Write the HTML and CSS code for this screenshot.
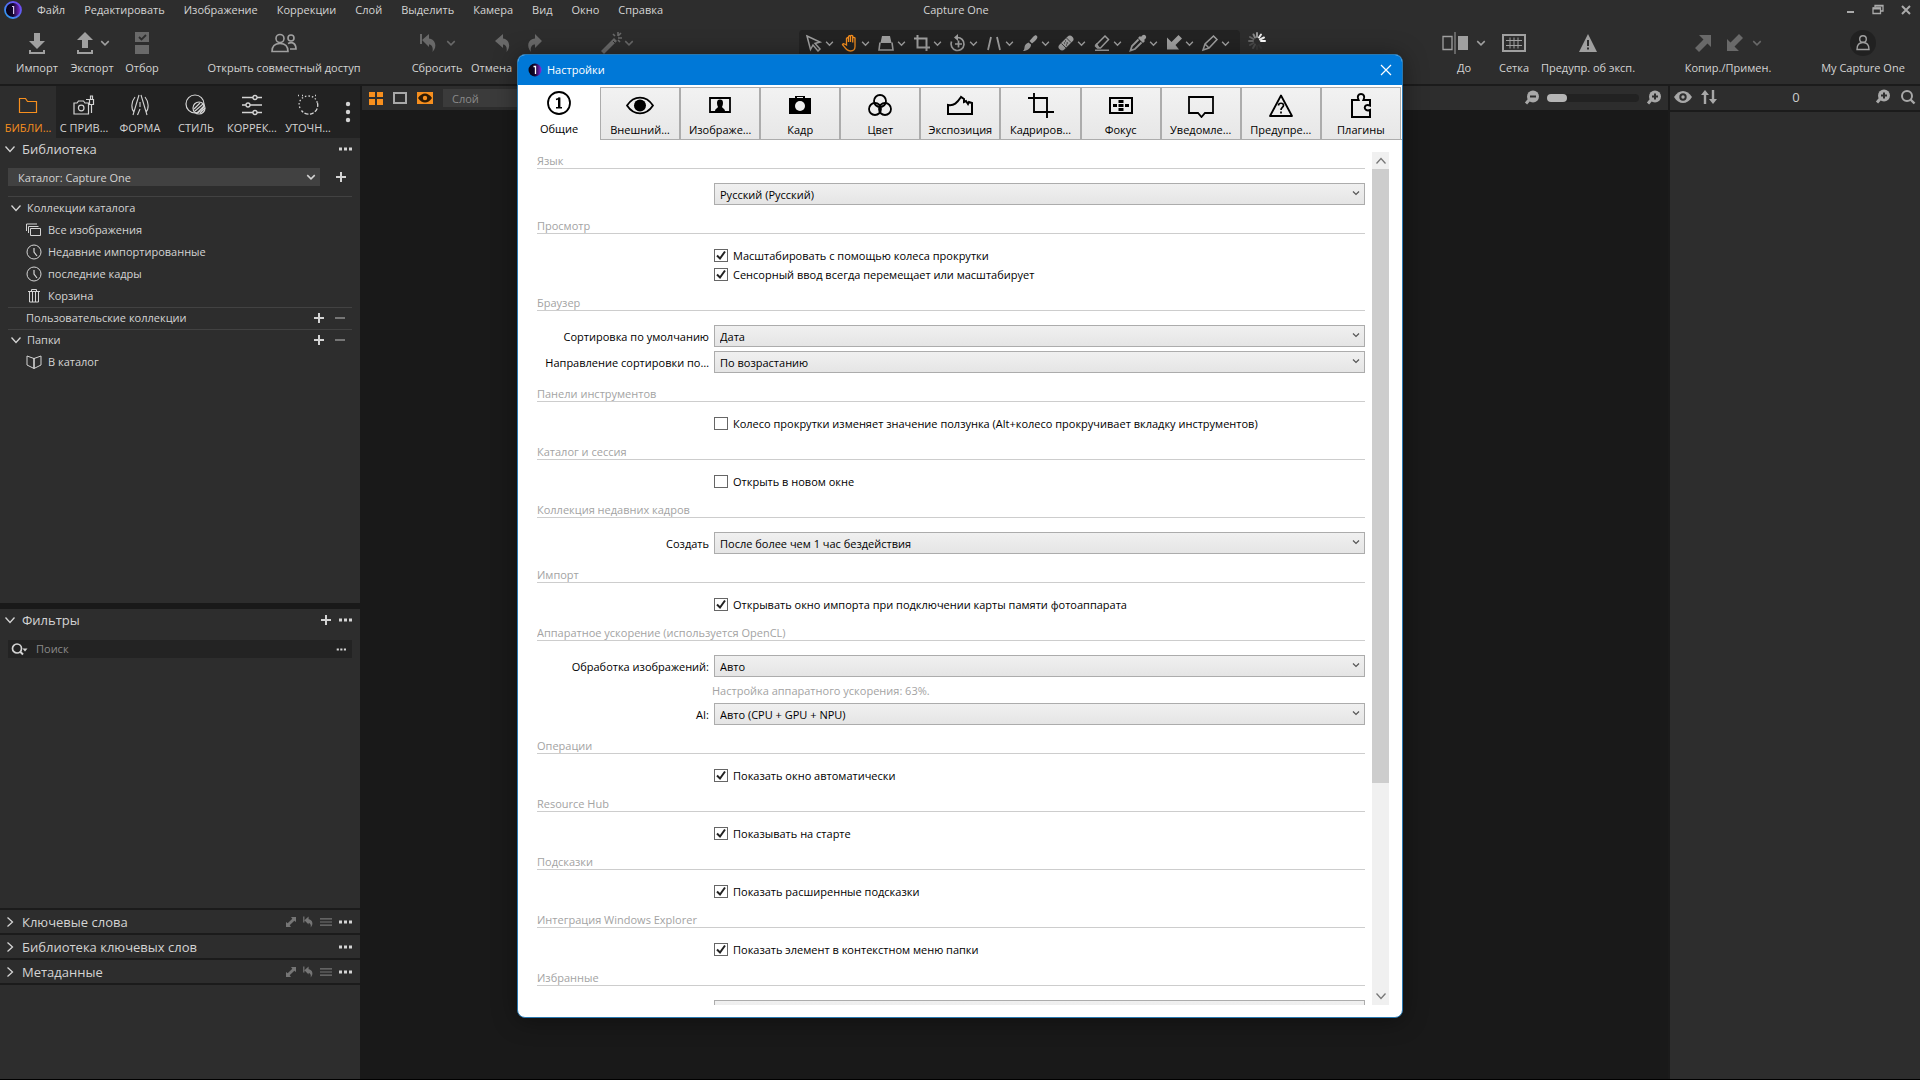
FILE: index.html
```html
<!DOCTYPE html>
<html lang="ru">
<head>
<meta charset="utf-8">
<title>Capture One</title>
<link rel="stylesheet" href="styles.css">
</head>
<body>
<svg class="sprite" aria-hidden="true">
  <defs>
    <linearGradient id="violet" x1="0" x2="1"><stop offset="0" stop-color="#060212"/><stop offset=".5" stop-color="#12062e"/><stop offset="1" stop-color="#8a2be2"/></linearGradient>
    <linearGradient id="ring" x1="1" x2="0" y1="0" y2="1"><stop offset="0" stop-color="#7b3cf0"/><stop offset="1" stop-color="#2aa4f4"/></linearGradient>
  </defs>
  <symbol id="chev" viewBox="0 0 8 8"><path d="M1 2.5l3 3 3-3" fill="none" stroke="currentColor" stroke-width="1.2"/></symbol>
  <symbol id="open" viewBox="0 0 12 12"><path d="M1.500 3.500l4.500 5 4.500-5" fill="none" stroke="currentColor" stroke-width="1.3"/></symbol>
  <symbol id="closed" viewBox="0 0 12 12"><path d="M3.500 1.500l5 4.500-5 4.500" fill="none" stroke="currentColor" stroke-width="1.3"/></symbol>
  <symbol id="plus" viewBox="0 0 12 12"><path d="M6 1v10M1 6h10" stroke="currentColor" stroke-width="2"/></symbol>
  <symbol id="minus" viewBox="0 0 12 12"><path d="M1 6h10" stroke="currentColor" stroke-width="2"/></symbol>
  <symbol id="dots" viewBox="0 0 14 4"><path d="M1 .5h3v3H1zM6 .5h3v3H6zM11 .5h3v3h-3z" fill="currentColor"/></symbol>
  <symbol id="import" viewBox="0 0 22 22"><path d="M8 1h6v8h5l-8 8-8-8h5zM3 18h2v2h12v-2h2v4H3z" fill="currentColor"/></symbol>
  <symbol id="export" viewBox="0 0 22 22"><path d="M8 16h6V8h5l-8-8-8 8h5zM3 18h2v2h12v-2h2v4H3z" fill="currentColor"/></symbol>
  <symbol id="cull" viewBox="0 0 22 22"><path d="M4 0h14v10H4zM4 13h14v9H4z" fill="currentColor"/><path d="M8 5l2.500 2.500L15 3" fill="none" stroke="#2d2d2d" stroke-width="1.8"/></symbol>
  <symbol id="people" viewBox="0 0 26 20"><g fill="none" stroke="currentColor" stroke-width="1.600"><circle cx="9" cy="5.500" r="4"/><path d="M1 18.500c0-5 3-8 8-8s8 3 8 8z"/><circle cx="20" cy="5" r="3"/><path d="M17 10.500c4-2 8-.5 8 5.500h-6"/></g></symbol>
  <symbol id="undo" viewBox="0 0 20 20"><path d="M3 8l8-7v4.500c6 .5 8.500 8 3.500 13.500 1-5-1-7.500-3.500-7.500V15z" fill="currentColor"/></symbol>
  <symbol id="reset" viewBox="0 0 20 20"><path d="M2 1h2v10H2zM4 7l7-6v4.500c6 .5 9 8 3.500 13.500 1-5-1-7.500-3.500-7.500V14z" fill="currentColor"/></symbol>
  <symbol id="redo" viewBox="0 0 20 20"><path d="M17 8L10 1v4.500C3 6 1 13 6 19c-1-5 1-7.500 4-7.500V15z" fill="currentColor"/></symbol>
  <symbol id="wand" viewBox="0 0 24 24"><path d="M1 20L14 7l3 3L4 23z" fill="currentColor"/><path d="M13 10l3 3" stroke="#2d2d2d"/><path d="M18 1v4M22 7h-4M13 3l2 2M21 2l-3 3M20 11l-2-2" stroke="currentColor" stroke-width="1.600"/></symbol>
  <symbol id="cursor" viewBox="0 0 18 18"><path d="M2 2l13 6-5 1.500 5 5.500-2 2-5-6-2.500 4.500z" fill="none" stroke="currentColor" stroke-width="1.500"/></symbol>
  <symbol id="hand" viewBox="0 0 18 18"><path d="M5.500 11V4.500q1-1.500 2 0V8 2.500q1-1.500 2 0V8 2q1.200-1.200 2.200 0v6.500V4q1-1.200 2.300 0v8.500c0 3-1.500 4.500-4.500 4.500-3.500 0-4.500-2-8-6.500q1-1.700 4 .5z" fill="none" stroke="currentColor" stroke-width="1.300"/></symbol>
  <symbol id="loupe-tool" viewBox="0 0 18 18"><path d="M5 2h8l1.500 7h-11z" fill="currentColor"/><path d="M3 8.500L2 16h14l-1-7.500" fill="none" stroke="currentColor" stroke-width="1.600"/></symbol>
  <symbol id="crop" viewBox="0 0 18 18"><path d="M4.500 1v12.500H17M1 4.500h12.500V17" fill="none" stroke="currentColor" stroke-width="2"/></symbol>
  <symbol id="rotate" viewBox="0 0 18 18"><path d="M8 3.500a6.500 6.500 0 1 1-5.500 4M9.500 6.500v7M6 10h7" fill="none" stroke="currentColor" stroke-width="1.700"/><path d="M9 0v7L5 3.500z" fill="currentColor"/></symbol>
  <symbol id="keystone" viewBox="0 0 18 18"><path d="M6 3L3 16M12 3l3 13" stroke="currentColor" stroke-width="1.800"/></symbol>
  <symbol id="brush" viewBox="0 0 18 18"><path d="M16 2c1 1 0 3-2 5l-3 2.500-2.500-2.500L12 3c2-2 3-2 4-1zM7.500 8.500l2.500 2c0 4-4 6.500-8 6.500 2-2 1-3 2-5.500 1-2 2.500-2.500 3.500-3z" fill="currentColor"/></symbol>
  <symbol id="heal" viewBox="0 0 18 18"><rect x="0" y="5.500" width="18" height="7" rx="3.500" transform="rotate(-45 9 9)" fill="currentColor"/><path d="M8 6.500h1v1H8zM10 8.500h1v1h-1zM7 8.500h1v1H7zM9 10.500h1v1H9zM9 8.500h.5v1H9z" fill="#222"/><path d="M9.500 4l4.500 4.500M4.500 9.500L9 14" stroke="#222" stroke-width=".8"/></symbol>
  <symbol id="eraser" viewBox="0 0 18 18"><path d="M4 10l8-8 3.500 3.500-8 8.500H4.500L2.500 12z" fill="none" stroke="currentColor" stroke-width="1.500"/><path d="M2 11l3 3h2l-3.500-5zM2 15.500h14V17H2z" fill="currentColor"/></symbol>
  <symbol id="picker" viewBox="0 0 18 18"><path d="M16.500 1.500c1.500 1.500.5 3-1.500 4.500l1 1-2 2-5-5 2-2 1 1c1.500-2 3-3 4.500-1.500z" fill="currentColor"/><path d="M9.500 5.500L3 12l-1.500 4.500L6 15l6.500-6.500" fill="none" stroke="currentColor" stroke-width="1.800"/></symbol>
  <symbol id="apply" viewBox="0 0 18 18"><path d="M13.500 1L17 4.500 10.500 11l3.500 4.500H2V3.500L6.500 8z" fill="currentColor"/></symbol>
  <symbol id="pen" viewBox="0 0 18 18"><path d="M2 16l2-6 8.500-8L16 5.500 8 14zM4 10l4 4" fill="none" stroke="currentColor" stroke-width="1.500"/></symbol>
  <symbol id="spin" viewBox="0 0 18 18"><g stroke-width="2" stroke-linecap="round"><path d="M9 1v4" stroke="#999"/><path d="M13 2.500l-2 3M16 5.500L12 7.500" stroke="#eee"/><path d="M17 9h-4" stroke="#fff"/><path d="M5.500 2.500l1.500 3" stroke="#888"/><path d="M2 5l3.500 2M1 9h4" stroke="#666"/><path d="M2 13l3.500-2M5 16l2-3.500" stroke="#4a4a4a"/><path d="M9 17v-3M13 16l-2-3" stroke="#363636"/></g></symbol>
  <symbol id="before" viewBox="0 0 26 22"><path d="M1 4.500h9v13H1z" fill="none" stroke="currentColor" stroke-width="1.300"/><path d="M12.500 0h1v22h-1zM16 4h10v14H16z" fill="currentColor"/></symbol>
  <symbol id="grid" viewBox="0 0 24 18"><path d="M1 1h22v16H1z" fill="none" stroke="currentColor" stroke-width="2"/><path d="M4 6.500h16M4 11.500h16M8 3.500v11M12 3.500v11M16 3.500v11" stroke="currentColor" stroke-width="1"/></symbol>
  <symbol id="warn" viewBox="0 0 20 18"><path d="M10 0l9 18H1z" fill="currentColor"/><path d="M10 6v6M10 13.500v2" stroke="#2d2d2d" stroke-width="2"/></symbol>
  <symbol id="arrow-up" viewBox="0 0 18 18"><path d="M17 1v12l-3.500-3.500L5 18l-4-4 8.500-8.500L5 1z" fill="currentColor"/></symbol>
  <symbol id="arrow-down" viewBox="0 0 18 18"><path d="M1 17V5l3.500 3.500L13 0l4 4-8.500 8.500L13 17z" fill="currentColor"/></symbol>
  <symbol id="user" viewBox="0 0 26 26"><circle cx="13" cy="13" r="13" fill="#212121"/><g fill="none" stroke="currentColor" stroke-width="1.400"><circle cx="13" cy="9" r="3.300"/><path d="M7 19.500c0-4 2-7 6-7s6 3 6 7z"/></g></symbol>
  <symbol id="folder" viewBox="0 0 20 18"><path d="M1.500 16.500v-14h6l2 3h9v11z" fill="none" stroke="currentColor" stroke-width="1.200"/></symbol>
  <symbol id="tether" viewBox="0 0 22 20"><g fill="none" stroke="currentColor" stroke-width="1.200"><path d="M1 8h3l1.500-2h5L12 8h3.500v11H1z"/><circle cx="8.200" cy="13" r="2.800"/><path d="M16.500 4.500h4v5h-4zM17.500 4V1h2v3M18.500 10v8M13 4.500h3"/></g></symbol>
  <symbol id="shape" viewBox="0 0 20 22"><path d="M9 1L3 21M11 1l6 20M5 3c-4 5-4 12-1 15M15 3c4 5 4 12 1 15M10 8v5M7.500 21L10 15" fill="none" stroke="currentColor" stroke-width="1.100"/></symbol>
  <symbol id="style" viewBox="0 0 22 22"><g fill="none" stroke="currentColor" stroke-width="1.200"><circle cx="10" cy="10" r="9"/><circle cx="14" cy="14" r="6"/><path d="M9 15l6-6M10 17l8-7M12 19l7-7M15 19l5-5"/></g></symbol>
  <symbol id="sliders" viewBox="0 0 22 20"><g fill="none" stroke="currentColor" stroke-width="1.300"><path d="M1 2.500h11M16 2.500h5M1 10h4M9 10h12M1 17.500h11M16 17.500h5"/><circle cx="14" cy="2.500" r="2"/><circle cx="7" cy="10" r="2"/><circle cx="14" cy="17.500" r="2"/></g></symbol>
  <symbol id="refine" viewBox="0 0 22 22"><g fill="none" stroke="currentColor" stroke-width="1.300"><path d="M20.500 9a9 9 0 0 1-16 7.500" stroke-dasharray="4 1.500"/><path d="M3 14C0 8 5 2 11 2s8 3 9.500 7" stroke-dasharray="1.500 2"/><path d="M1 1.500h1M5 1.500h1M18 1.500h1"/></g></symbol>
  <symbol id="stack" viewBox="0 0 16 14"><path d="M4.500 5.500h10v7h-10zM2.500 10V3.500h10M.5 8V1h10.500" fill="none" stroke="currentColor" stroke-width="1"/></symbol>
  <symbol id="clock" viewBox="0 0 16 16"><circle cx="8" cy="8" r="7" fill="none" stroke="currentColor"/><path d="M8 4v4l3 4" fill="none" stroke="currentColor" stroke-width="1.200"/></symbol>
  <symbol id="bin" viewBox="0 0 16 14"><path d="M2 2.500h12M5.500 2.500v-2h5v2M3.500 3v10h9V3M6.500 3v10M9.500 3v10" fill="none" stroke="currentColor"/></symbol>
  <symbol id="book" viewBox="0 0 16 14"><path d="M8 3.500L1 1v9l7 3.500L15 10V1z" fill="none" stroke="currentColor"/><path d="M8 3v10.500" stroke="currentColor" stroke-width="1.600"/></symbol>
  <symbol id="search" viewBox="0 0 16 16"><circle cx="7" cy="7" r="5" fill="none" stroke="currentColor" stroke-width="2"/><path d="M10.500 10.500l4 4" stroke="currentColor" stroke-width="2.400"/></symbol>
  <symbol id="search-menu" viewBox="0 0 18 14"><circle cx="7" cy="6.500" r="4.500" fill="none" stroke="currentColor" stroke-width="1.700"/><path d="M10 9.500l3 3" stroke="currentColor" stroke-width="2"/><path d="M12.500 6.500h5L15 9.500z" fill="currentColor"/></symbol>
  <symbol id="zoom-in" viewBox="0 0 16 16"><path d="M5 10L2 13.500" stroke="currentColor" stroke-width="3"/><circle cx="9" cy="6.500" r="6" fill="currentColor"/><path d="M9 3.500v6M6 6.500h6" stroke="#2d2d2d" stroke-width="2"/></symbol>
  <symbol id="zoom-out" viewBox="0 0 16 16"><path d="M5 10L2 13.500" stroke="currentColor" stroke-width="3"/><circle cx="9" cy="6.500" r="6" fill="currentColor"/><path d="M6 6.500h6" stroke="#2d2d2d" stroke-width="2"/></symbol>
  <symbol id="eye-solid" viewBox="0 0 18 12"><path d="M0 6c5-8 13-8 18 0-5 8-13 8-18 0z" fill="currentColor"/><circle cx="9" cy="6" r="3.700" fill="#2d2d2d"/><circle cx="9" cy="6" r="1.700" fill="currentColor"/></symbol>
  <symbol id="sort" viewBox="0 0 16 14"><path d="M4 14V4M12 0v10" stroke="currentColor" stroke-width="2.400"/><path d="M4 0l4 5H0zM12 14l4-5H8z" fill="currentColor"/></symbol>
  <symbol id="tiles" viewBox="0 0 14 13"><path d="M0 0h6v5H0zM8 0h6v5H8zM0 7h6v6H0zM8 7h6v6H8z" fill="currentColor"/></symbol>
  <symbol id="single" viewBox="0 0 14 12"><path d="M1 1h12v10H1z" fill="none" stroke="currentColor" stroke-width="2"/></symbol>
  <symbol id="eye-box" viewBox="0 0 16 12"><path d="M0 0h16v12H0z" fill="currentColor"/><path d="M1 6c4-6 10-6 14 0-4 6-10 6-14 0z" fill="#2d1a05"/><circle cx="8" cy="6" r="2.200" fill="#f78f1e"/></symbol>
  <symbol id="expand" viewBox="0 0 10 10"><path d="M10 0v5L8.300 3.700 3.700 8.300 5 10H0V5l1.700 1.300 4.600-4.600L5 0z" fill="currentColor"/></symbol>
  <symbol id="lines" viewBox="0 0 12 8"><path d="M0 .8h12M0 4h12M0 7.200h12" stroke="currentColor" stroke-width="1.200"/></symbol>
  <symbol id="logo" viewBox="0 0 18 18"><circle cx="9" cy="9" r="8" fill="url(#violet)" stroke="url(#ring)" stroke-width="1.800"/><path d="M8 5.500h1.600V13" fill="none" stroke="#d8c8f0" stroke-width="1.200"/></symbol>
  <symbol id="logo-small" viewBox="0 0 14 14"><circle cx="7" cy="7" r="6.500" fill="url(#violet)"/><path d="M5.500 3.500h2V11" fill="none" stroke="#fff" stroke-width="1.300"/></symbol>
  <symbol id="p-one" viewBox="0 0 28 26"><circle cx="14" cy="13" r="11" fill="none" stroke="currentColor" stroke-width="1.800"/><path d="M11 9.500l3-1V17M11 17.700h6" fill="none" stroke="currentColor" stroke-width="1.500"/><path d="M14.200 7.500v10" stroke="currentColor" stroke-width="2.400"/></symbol>
  <symbol id="p-eye" viewBox="0 0 28 26"><path d="M1 13.500C8 3 20 3 27 13.500 20 24 8 24 1 13.500z" fill="none" stroke="currentColor" stroke-width="1.800"/><circle cx="14" cy="13.500" r="6" fill="currentColor"/></symbol>
  <symbol id="p-image" viewBox="0 0 28 26"><path d="M4 6h20v14H4z" fill="none" stroke="currentColor" stroke-width="1.800"/><path d="M14 7.500c2 0 3 1 3 3.500 0 2-.7 3-1 4 1 2 2.500 1 3 4H9c.5-3 2-2 3-4-.3-1-1-2-1-4 0-2.500 1-3.500 3-3.500z" fill="currentColor"/></symbol>
  <symbol id="p-camera" viewBox="0 0 28 26"><path d="M3 6h6V4h10v2h6v16H3z" fill="currentColor"/><circle cx="14" cy="14" r="5" fill="#f0f0f0"/><path d="M11 5.500h6" stroke="#f0f0f0"/></symbol>
  <symbol id="p-color" viewBox="0 0 28 26"><g fill="none" stroke="currentColor" stroke-width="1.800"><circle cx="14" cy="9" r="6"/><circle cx="9" cy="17" r="6"/><circle cx="19" cy="17" r="6"/></g></symbol>
  <symbol id="p-expo" viewBox="0 0 28 26"><path d="M2 22V13c6 1 9-2 13-8l3 2v3l2-1 2 3 1-2 3 1v11z" fill="none" stroke="currentColor" stroke-width="2"/></symbol>
  <symbol id="p-crop" viewBox="0 0 28 26"><path d="M7 1v19h20M1 6h19v20" fill="none" stroke="currentColor" stroke-width="1.900"/></symbol>
  <symbol id="p-focus" viewBox="0 0 28 26"><path d="M3 6h22v15H3z" fill="none" stroke="currentColor" stroke-width="2"/><path d="M6 12h4v3H6zM11.500 12h5v3h-5zM18 12h4v3h-4zM11.500 8h5v3h-5zM11.500 16h5v3h-5z" fill="currentColor"/></symbol>
  <symbol id="p-note" viewBox="0 0 28 26"><path d="M2 5h24v16h-8l-3.500 4-3.500-4H2z" fill="none" stroke="currentColor" stroke-width="1.800"/></symbol>
  <symbol id="p-warn" viewBox="0 0 28 26"><path d="M14 3.500L25 24H3z" fill="none" stroke="currentColor" stroke-width="1.800" stroke-linejoin="round"/><path d="M11.500 13.500c0-3 5-3 5 0 0 2-2.500 2-2.500 4.500M14 19.500v2" fill="none" stroke="currentColor" stroke-width="1.700"/></symbol>
  <symbol id="p-plug" viewBox="0 0 28 26"><path d="M5 8h6.500c-4-8 9-8 5 0H23v5.500c-7-3-7 7 0 4.500v7H5z" fill="none" stroke="currentColor" stroke-width="2"/></symbol>
</svg>

<header class="top">
  <div class="menubar">
    <nav class="menus">
      <svg width="18" height="18"><use href="#logo"/></svg>
      <a href="#">Файл</a><a href="#">Редактировать</a><a href="#">Изображение</a><a href="#">Коррекции</a><a href="#">Слой</a><a href="#">Выделить</a><a href="#">Камера</a><a href="#">Вид</a><a href="#">Окно</a><a href="#">Справка</a>
    </nav>
    <div class="app-title">Capture One</div>
    <div class="window-buttons">
      <button aria-label="Свернуть"><svg width="12" height="12"><path d="M3 7h7v2H3z" fill="#aaa"/></svg></button>
      <button aria-label="Восстановить"><svg width="12" height="12"><path d="M3 3V1.500h8V7H9M1 4h7.500v5.500H1z" fill="none" stroke="#aaa" stroke-width="1.300"/><path d="M1 3.500h8v2H1zM3 1h8v1.500H3z" fill="#aaa"/></svg></button>
      <button aria-label="Закрыть"><svg width="12" height="12"><path d="M2 2l8 8M10 2l-8 8" stroke="#aaa" stroke-width="2"/></svg></button>
    </div>
  </div>
  <div class="toolbar">
    <button class="tool w56"><span class="glyphs"><svg width="22" height="22"><use href="#import"/></svg></span>Импорт</button>
    <button class="tool w54"><span class="glyphs"><svg width="22" height="22"><use href="#export"/></svg><svg class="lead" width="10" height="10"><use href="#chev"/></svg></span>Экспорт</button>
    <button class="tool w46 off"><span class="glyphs"><svg width="22" height="22"><use href="#cull"/></svg></span>Отбор</button>
    <button class="tool share"><span class="glyphs"><svg width="26" height="20"><use href="#people"/></svg></span>Открыть совместный доступ</button>
    <button class="tool reset off"><span class="glyphs"><svg width="20" height="20"><use href="#reset"/></svg><svg class="lead2" width="10" height="10"><use href="#chev"/></svg></span>Сбросить</button>
    <button class="tool undo off"><span class="glyphs"><svg width="20" height="20"><use href="#undo"/></svg></span>Отмена</button>
    <button class="tool redo off" aria-label="Повторить"><span class="glyphs"><svg width="20" height="20"><use href="#redo"/></svg></span></button>
    <button class="tool wand off" aria-label="Автокоррекция"><span class="glyphs"><svg width="24" height="24"><use href="#wand"/></svg><svg width="10" height="10"><use href="#chev"/></svg></span></button>
    <div class="cursors">
      <button aria-label="Выбор"><svg width="18" height="18"><use href="#cursor"/></svg><svg width="9" height="9"><use href="#chev"/></svg></button>
      <button aria-label="Панорама"><svg class="orange" width="18" height="18"><use href="#hand"/></svg><svg width="9" height="9"><use href="#chev"/></svg></button>
      <button aria-label="Лупа"><svg width="18" height="18"><use href="#loupe-tool"/></svg><svg width="9" height="9"><use href="#chev"/></svg></button>
      <button aria-label="Кадрирование"><svg width="18" height="18"><use href="#crop"/></svg><svg width="9" height="9"><use href="#chev"/></svg></button>
      <button aria-label="Поворот"><svg width="18" height="18"><use href="#rotate"/></svg><svg width="9" height="9"><use href="#chev"/></svg></button>
      <button aria-label="Перспектива"><svg width="18" height="18"><use href="#keystone"/></svg><svg width="9" height="9"><use href="#chev"/></svg></button>
      <button aria-label="Кисть"><svg width="18" height="18"><use href="#brush"/></svg><svg width="9" height="9"><use href="#chev"/></svg></button>
      <button aria-label="Лечение"><svg width="18" height="18"><use href="#heal"/></svg><svg width="9" height="9"><use href="#chev"/></svg></button>
      <button aria-label="Ластик"><svg width="18" height="18"><use href="#eraser"/></svg><svg width="9" height="9"><use href="#chev"/></svg></button>
      <button aria-label="Пипетка"><svg width="18" height="18"><use href="#picker"/></svg><svg width="9" height="9"><use href="#chev"/></svg></button>
      <button aria-label="Применить"><svg width="18" height="18"><use href="#apply"/></svg><svg width="9" height="9"><use href="#chev"/></svg></button>
      <button aria-label="Аннотация"><svg width="18" height="18"><use href="#pen"/></svg><svg width="9" height="9"><use href="#chev"/></svg></button>
    </div>
    <svg class="spinner" width="18" height="18"><use href="#spin"/></svg>
    <div class="tools-right">
      <button class="tool w62"><span class="glyphs"><svg width="26" height="22"><use href="#before"/></svg><svg class="lead2" width="10" height="10"><use href="#chev"/></svg></span>До</button>
      <button class="tool w38"><span class="glyphs"><svg width="24" height="18"><use href="#grid"/></svg></span>Сетка</button>
      <button class="tool w110"><span class="glyphs"><svg width="20" height="18"><use href="#warn"/></svg></span>Предупр. об эксп.</button>
      <button class="tool copy off"><span class="glyphs"><svg width="18" height="18"><use href="#arrow-up"/></svg><svg class="lead3" width="18" height="18"><use href="#arrow-down"/></svg><svg class="lead2" width="10" height="10"><use href="#chev"/></svg></span>Копир./Примен.</button>
      <button class="tool account"><span class="glyphs"><svg width="26" height="26"><use href="#user"/></svg></span>My Capture One</button>
    </div>
  </div>
</header>

<main class="workspace">
  <aside class="side">
    <div class="side-tabs">
      <button class="active"><svg width="20" height="18"><use href="#folder"/></svg>БИБЛИ…</button>
      <button><svg width="22" height="20"><use href="#tether"/></svg>С ПРИВ…</button>
      <button><svg width="20" height="22"><use href="#shape"/></svg>ФОРМА</button>
      <button><svg width="22" height="22"><use href="#style"/></svg>СТИЛЬ</button>
      <button><svg width="22" height="20"><use href="#sliders"/></svg>КОРРЕК…</button>
      <button><svg width="22" height="22"><use href="#refine"/></svg>УТОЧН…</button>
      <button class="kebab" aria-label="Ещё"><svg width="6" height="22"><circle cx="3" cy="3" r="2.200"/><circle cx="3" cy="11" r="2.200"/><circle cx="3" cy="19" r="2.200"/></svg></button>
    </div>

    <section class="panel library">
      <h2 class="panel-head"><svg width="12" height="12"><use href="#open"/></svg><span>Библиотека</span><svg width="14" height="4"><use href="#dots"/></svg></h2>
      <div class="catalog">
        <span class="pick"><select aria-label="Каталог"><option>Каталог: Capture One</option></select><svg width="10" height="10"><use href="#chev"/></svg></span>
        <button aria-label="Добавить"><svg width="12" height="12"><use href="#plus"/></svg></button>
      </div>
      <ul class="tree">
        <li class="group"><svg width="12" height="12"><use href="#open"/></svg><span>Коллекции каталога</span></li>
        <li class="leaf"><svg width="16" height="14"><use href="#stack"/></svg><span>Все изображения</span></li>
        <li class="leaf"><svg width="16" height="16"><use href="#clock"/></svg><span>Недавние импортированные</span></li>
        <li class="leaf"><svg width="16" height="16"><use href="#clock"/></svg><span>последние кадры</span></li>
        <li class="leaf"><svg width="16" height="14"><use href="#bin"/></svg><span>Корзина</span></li>
        <li class="group ruled flat"><span>Пользовательские коллекции</span><svg width="12" height="12"><use href="#plus"/></svg><svg class="dim" width="12" height="12"><use href="#minus"/></svg></li>
        <li class="group ruled"><svg width="12" height="12"><use href="#open"/></svg><span>Папки</span><svg width="12" height="12"><use href="#plus"/></svg><svg class="dim" width="12" height="12"><use href="#minus"/></svg></li>
        <li class="leaf"><svg width="16" height="14"><use href="#book"/></svg><span>В каталог</span></li>
      </ul>
    </section>

    <section class="panel filters">
      <h2 class="panel-head"><svg width="12" height="12"><use href="#open"/></svg><span>Фильтры</span><svg width="12" height="12"><use href="#plus"/></svg><svg width="14" height="4"><use href="#dots"/></svg></h2>
      <div class="find"><svg width="18" height="14"><use href="#search-menu"/></svg><input type="text" placeholder="Поиск" aria-label="Поиск"><svg width="10" height="3"><use href="#dots"/></svg></div>
    </section>

    <h2 class="panel-head folded"><svg width="12" height="12"><use href="#closed"/></svg><span>Ключевые слова</span><svg class="dim" width="10" height="10"><use href="#expand"/></svg><svg class="dim" width="12" height="12"><use href="#reset"/></svg><svg class="dim" width="12" height="8"><use href="#lines"/></svg><svg width="14" height="4"><use href="#dots"/></svg></h2>
    <h2 class="panel-head folded"><svg width="12" height="12"><use href="#closed"/></svg><span>Библиотека ключевых слов</span><svg width="14" height="4"><use href="#dots"/></svg></h2>
    <h2 class="panel-head folded"><svg width="12" height="12"><use href="#closed"/></svg><span>Метаданные</span><svg class="dim" width="10" height="10"><use href="#expand"/></svg><svg class="dim" width="12" height="12"><use href="#reset"/></svg><svg class="dim" width="12" height="8"><use href="#lines"/></svg><svg width="14" height="4"><use href="#dots"/></svg></h2>
    <div class="panel rest"></div>
  </aside>

  <section class="viewer">
    <div class="viewer-bar">
      <svg class="orange" width="14" height="13"><use href="#tiles"/></svg>
      <svg width="14" height="12"><use href="#single"/></svg>
      <svg class="orange" width="16" height="12"><use href="#eye-box"/></svg>
      <input class="layer" type="text" placeholder="Слой" aria-label="Слой">
      <svg width="16" height="16"><use href="#zoom-out"/></svg>
      <input class="zoom" type="range" min="0" max="100" value="0" aria-label="Масштаб">
      <svg width="16" height="16"><use href="#zoom-in"/></svg>
    </div>
  </section>

  <aside class="browser">
    <div class="browser-bar">
      <svg width="18" height="12"><use href="#eye-solid"/></svg>
      <svg width="16" height="14"><use href="#sort"/></svg>
      <span class="count">0</span>
      <svg width="16" height="16"><use href="#zoom-in"/></svg>
      <svg width="16" height="16"><use href="#search"/></svg>
    </div>
  </aside>
</main>

<div class="dialog" role="dialog" aria-label="Настройки">
  <div class="dialog-title"><svg width="14" height="14"><use href="#logo-small"/></svg><span>Настройки</span><button aria-label="Закрыть"><svg width="12" height="12"><path d="M1 1l10 10M11 1L1 11" stroke="#fff" stroke-width="1.200"/></svg></button></div>
  <div class="tabs">
    <button class="current"><svg width="28" height="26"><use href="#p-one"/></svg>Общие</button>
    <button><svg width="28" height="26"><use href="#p-eye"/></svg>Внешний…</button>
    <button><svg width="28" height="26"><use href="#p-image"/></svg>Изображе…</button>
    <button><svg width="28" height="26"><use href="#p-camera"/></svg>Кадр</button>
    <button><svg width="28" height="26"><use href="#p-color"/></svg>Цвет</button>
    <button><svg width="28" height="26"><use href="#p-expo"/></svg>Экспозиция</button>
    <button><svg width="28" height="26"><use href="#p-crop"/></svg>Кадриров…</button>
    <button><svg width="28" height="26"><use href="#p-focus"/></svg>Фокус</button>
    <button><svg width="28" height="26"><use href="#p-note"/></svg>Уведомле…</button>
    <button><svg width="28" height="26"><use href="#p-warn"/></svg>Предупре…</button>
    <button><svg width="28" height="26"><use href="#p-plug"/></svg>Плагины</button>
  </div>
  <div class="dialog-body">
    <form class="settings">
      <section><h3>Язык</h3><div class="rows">
        <div class="row"><span></span><span class="combo"><select aria-label="Язык"><option>Русский (Русский)</option></select><svg width="8" height="8"><use href="#chev"/></svg></span></div>
      </div></section>
      <section><h3>Просмотр</h3><div class="rows">
        <label class="check"><input type="checkbox" checked>Масштабировать с помощью колеса прокрутки</label>
        <label class="check"><input type="checkbox" checked>Сенсорный ввод всегда перемещает или масштабирует</label>
      </div></section>
      <section><h3>Браузер</h3><div class="rows">
        <div class="row"><label for="sort-by">Сортировка по умолчанию</label><span class="combo"><select id="sort-by"><option>Дата</option></select><svg width="8" height="8"><use href="#chev"/></svg></span></div>
        <div class="row"><label for="sort-dir">Направление сортировки по…</label><span class="combo"><select id="sort-dir"><option>По возрастанию</option></select><svg width="8" height="8"><use href="#chev"/></svg></span></div>
      </div></section>
      <section><h3>Панели инструментов</h3><div class="rows">
        <label class="check"><input type="checkbox">Колесо прокрутки изменяет значение ползунка (Alt+колесо прокручивает вкладку инструментов)</label>
      </div></section>
      <section><h3>Каталог и сессия</h3><div class="rows">
        <label class="check"><input type="checkbox">Открыть в новом окне</label>
      </div></section>
      <section><h3>Коллекция недавних кадров</h3><div class="rows">
        <div class="row"><label for="recent">Создать</label><span class="combo"><select id="recent"><option>После более чем 1 час бездействия</option></select><svg width="8" height="8"><use href="#chev"/></svg></span></div>
      </div></section>
      <section><h3>Импорт</h3><div class="rows">
        <label class="check"><input type="checkbox" checked>Открывать окно импорта при подключении карты памяти фотоаппарата</label>
      </div></section>
      <section><h3>Аппаратное ускорение (используется OpenCL)</h3><div class="rows">
        <div class="row"><label for="gpu">Обработка изображений:</label><span class="combo"><select id="gpu"><option>Авто</option></select><svg width="8" height="8"><use href="#chev"/></svg></span></div>
        <p class="hint">Настройка аппаратного ускорения: 63%.</p>
        <div class="row"><label for="ai">AI:</label><span class="combo"><select id="ai"><option>Авто (CPU + GPU + NPU)</option></select><svg width="8" height="8"><use href="#chev"/></svg></span></div>
      </div></section>
      <section><h3>Операции</h3><div class="rows">
        <label class="check"><input type="checkbox" checked>Показать окно автоматически</label>
      </div></section>
      <section><h3>Resource Hub</h3><div class="rows">
        <label class="check"><input type="checkbox" checked>Показывать на старте</label>
      </div></section>
      <section><h3>Подсказки</h3><div class="rows">
        <label class="check"><input type="checkbox" checked>Показать расширенные подсказки</label>
      </div></section>
      <section><h3>Интеграция Windows Explorer</h3><div class="rows">
        <label class="check"><input type="checkbox" checked>Показать элемент в контекстном меню папки</label>
      </div></section>
      <section><h3>Избранные</h3><div class="rows">
        <div class="row"><span></span><span class="combo"><select aria-label="Избранные"><option></option></select></span></div>
      </div></section>
    </form>
    <div class="scrollbar">
      <svg class="up" width="12" height="12"><use href="#open"/></svg>
      <div class="track"><div class="thumb"></div></div>
      <svg width="12" height="12"><use href="#open"/></svg>
    </div>
  </div>
</div>
</body>
</html>
```

FILE: styles.css
```css
* { box-sizing: border-box; }
body {
  margin: 0;
  height: 100vh;
  display: flex;
  flex-direction: column;
  overflow: hidden;
  background: #191919;
  border-bottom: 1px solid #000;
  color: #d4d4d4;
  font: 11px/16px "Open Sans", "Noto Sans", sans-serif;
}
button, input, select { font: inherit; color: inherit; }
button { background: none; border: 0; padding: 0; }
svg { display: block; flex: none; fill: currentColor; }
h2, h3, p, ul { margin: 0; padding: 0; font-weight: 400; }
a { color: inherit; text-decoration: none; }
.sprite { position: absolute; width: 0; height: 0; }
.orange { color: #f78f1e; }
.dim { color: #757575; }

/* menu and toolbar */
.top { background: #2d2d2d; border-bottom: 2px solid #1b1b1b; }
.menubar { display: grid; grid-template-columns: 1fr auto 1fr; align-items: center; height: 20px; padding-right: 8px; }
.menus { display: flex; align-items: center; gap: 19px; padding-left: 4px; white-space: nowrap; }
.menus svg { margin-right: -4px; }
.window-buttons { display: flex; justify-content: flex-end; gap: 16px; }
.toolbar { display: flex; height: 64px; padding: 10px 0 0 9px; }
.tool { display: flex; flex-direction: column; align-items: center; flex: none; height: 50px; white-space: nowrap; }
.glyphs { display: flex; align-items: center; justify-content: center; height: 26px; margin-bottom: 4px; color: #a0a0a0; }
.off .glyphs { color: #696969; }
.lead { margin-left: 4px; }
.lead2 { margin-left: 8px; }
.lead3 { margin-left: 14px; }
.w56 { width: 56px; }
.w54 { width: 54px; }
.w46 { width: 46px; }
.w62 { width: 62px; }
.w38 { width: 38px; }
.w110 { width: 110px; }
.share { width: 170px; margin-left: 34px; }
.reset { width: 60px; margin-left: 38px; }
.undo { width: 62px; margin-left: 4px; align-items: flex-start; }
.undo .glyphs { width: 62px; }
.redo { width: 20px; margin-left: -8px; }
.wand { width: 38px; margin-left: 53px; }
.cursors { display: flex; flex: none; height: 26px; margin-left: 163px; padding: 0 3px 0 6px; background: #232323; border-radius: 4px; color: #a0a0a0; }
.cursors button { display: flex; align-items: center; width: 36px; gap: 2px; }
.spinner { margin: 2px 0 0 8px; }
.tools-right { display: flex; margin-left: auto; padding-right: 7px; }
.copy { width: 100px; margin-left: 35px; }
.account { width: 100px; margin-left: 35px; }

/* workspace */
.workspace { flex: 1; display: flex; min-height: 0; }
.side { width: 360px; flex: none; display: flex; flex-direction: column; }
.side-tabs { display: flex; height: 52px; background: #222; flex: none; }
.side-tabs button { width: 56px; display: flex; flex-direction: column; align-items: center; justify-content: flex-end; gap: 4px; padding-bottom: 2px; white-space: nowrap; }
.side-tabs button svg { height: 22px; }
.side-tabs .active { background: #2d2d2d; color: #f78f1e; }
.side-tabs .kebab { width: 12px; margin-left: 6px; padding: 0 0 15px; }
.panel { background: #2d2d2d; flex: 1 1 0; min-height: 0; }
.library { flex-grow: 465; border-bottom: 6px solid #191919; flex-basis: 6px; overflow: hidden; }
.filters { flex-grow: 299; }
.rest { flex-grow: 94; border-top: 2px solid #1b1b1b; flex-basis: 2px; }
.panel-head { display: flex; align-items: center; gap: 6px; height: 22px; padding: 0 8px 0 4px; background: #2d2d2d; font-size: 13px; line-height: 20px; flex: none; }
.panel-head span { flex: 1; }
.folded { height: 25px; border-top: 2px solid #1b1b1b; }
.catalog { display: flex; align-items: center; gap: 15px; margin: 8px 13px 10px 8px; }
.pick { position: relative; flex: 1; }
.pick select { appearance: none; width: 100%; height: 18px; padding: 1px 10px 0; border: 0; background: #414141; display: block; }
.pick svg { position: absolute; right: 4px; top: 4px; }
.tree { list-style: none; margin: 0 8px; border-top: 1px solid #424242; }
.tree li { display: flex; align-items: center; height: 22px; padding-right: 6px; }
.tree span { flex: 1; padding-left: 6px; }
.tree .group { padding-left: 2px; gap: 1px; }
.tree .group > svg + svg { margin-left: 8px; }
.tree .group span { padding-left: 4px; }
.tree .leaf { padding-left: 18px; }
.tree .ruled { box-shadow: inset 0 1px #424242; }
.tree .flat { padding-left: 14px; }
.find { display: flex; align-items: center; height: 18px; margin: 9px 8px; padding: 0 6px 0 2px; background: #232323; }
.find input { flex: 1; min-width: 0; margin-left: 6px; padding: 0 2px; border: 0; background: none; }
::placeholder { color: #8a8a8a; opacity: 1; }

.viewer { flex: 1; min-width: 0; padding-left: 2px; }
.viewer-bar { display: flex; align-items: center; height: 24px; padding: 0 6px 0 7px; background: #2d2d2d; color: #a8a8a8; gap: 10px; }
.layer { width: 200px; height: 18px; margin-right: auto; padding: 0 9px; border: 0; background: #3b3b3b; }
.zoom { appearance: none; width: 92px; height: 8px; margin: 0 -3px; border-radius: 4px; background: #222; }
.zoom::-webkit-slider-thumb { appearance: none; width: 20px; height: 8px; border-radius: 4px; background: #b5b5b5; }
.browser { width: 252px; flex: none; background: #2d2d2d; border-left: 2px solid #1b1b1b; }
.browser-bar { display: flex; align-items: center; height: 26px; gap: 9px; padding: 0 4px 2px; border-bottom: 2px solid #1b1b1b; color: #a8a8a8; }
.count { flex: 1; text-align: center; color: #ccc; font-size: 13px; }

/* settings window */
.dialog {
  position: absolute;
  top: 54px;
  bottom: 62px;
  left: calc(50% - 443px);
  width: 886px;
  display: flex;
  flex-direction: column;
  overflow: hidden;
  background: #fff;
  border: 1px solid #2a78b0;
  border-radius: 8px;
  box-shadow: 0 2px 24px rgba(0, 0, 0, .4);
  color: #000;
}
.dialog-title { display: flex; align-items: center; gap: 5px; height: 31px; flex: none; margin: -1px -1px 0; padding: 0 11px; background: #0078d7; color: #fff; }
.dialog-title span { flex: 1; }
.tabs { display: flex; height: 55px; flex: none; padding: 2px 1px 0 0; border-bottom: 1px solid #acacac; }
.tabs button { flex: 1; display: flex; flex-direction: column; align-items: center; gap: 4px; padding-top: 4px; border: 1px solid #acacac; border-bottom: 0; background: linear-gradient(#f2f2f2, #e7e7e7); white-space: nowrap; min-width: 0; }
.tabs .current { flex: 0 0 82px; margin: -2px 0 -1px; padding-top: 5px; background: #fff; border: 0; gap: 5px; }
.dialog-body { flex: 1; min-height: 0; display: flex; gap: 7px; padding: 12px 13px 12px 19px; }
.settings { flex: 1; overflow: hidden; }
.settings h3 { height: 29px; padding-top: 13px; font-size: 11px; line-height: 16px; color: #a3a3a3; border-bottom: 1px solid #cdcdcd; }
.settings section:first-child h3 { height: 17px; padding-top: 1px; }
.rows { display: flex; flex-direction: column; gap: 4px; padding-top: 14px; }
.row { display: grid; grid-template-columns: 172px 1fr; gap: 5px; align-items: center; }
.row label { padding-top: 1px; text-align: right; white-space: nowrap; }
.combo { position: relative; }
.combo select { appearance: none; display: block; width: 100%; height: 22px; padding: 1px 5px 0; border: 1px solid #acacac; border-radius: 0; background: linear-gradient(#f0f0f0, #e5e5e5); }
.combo svg { position: absolute; right: 5px; top: 6px; color: #555; }
.check { display: flex; align-items: center; gap: 5px; height: 15px; padding-left: 177px; white-space: nowrap; }
.check input { appearance: none; width: 14px; height: 13px; margin: 0; border: 1px solid #666; background: #fff center / 12px 11px no-repeat; }
.check input:checked { background-image: url("data:image/svg+xml,%3Csvg xmlns='http://www.w3.org/2000/svg' viewBox='0 0 12 11'%3E%3Cpath d='M2 5.500l3 3 5-7' fill='none' stroke='%23222' stroke-width='2'/%3E%3C/svg%3E"); }
.hint { height: 18px; padding: 1px 0 0 175px; line-height: 18px; color: #a3a3a3; }
.scrollbar { display: flex; flex-direction: column; align-items: center; width: 17px; flex: none; padding: 3px 0; background: #f0f0f0; color: #777; }
.up { transform: rotate(180deg); }
.track { flex: 1; width: 100%; margin: 2px 0; }
.thumb { height: 75%; background: #cdcdcd; }
```
